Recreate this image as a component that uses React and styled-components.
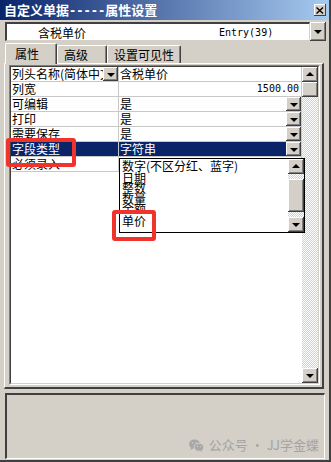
import React from 'react';
import styled, { createGlobalStyle } from 'styled-components';

const GlobalStyle = createGlobalStyle`
  body {
    margin: 0;
    background: #fff;
  }
  * {
    box-sizing: border-box;
  }
`;

const Window = styled.div`
  position: relative;
  width: 331px;
  height: 462px;
  display: flex;
  flex-direction: column;
  background: #d4d0c8;
  border-right: 2px solid #404040;
  border-bottom: 2px solid #404040;
  font-family: "Noto Sans CJK SC", sans-serif;
  font-size: 12px;
  color: #000;
  overflow: hidden;
`;

const TitleBar = styled.div`
  flex: none;
  height: 20px;
  display: flex;
  align-items: center;
  justify-content: space-between;
  padding: 0 3px 0 4px;
  background: linear-gradient(90deg, #0a246a 0%, #a6caf0 100%);
`;

const Title = styled.span`
  color: #fff;
  font-weight: bold;
  font-size: 13px;
  line-height: 20px;
  white-space: nowrap;
`;

const Dash = styled.span`
  font-family: "DejaVu Sans Mono", monospace;
  font-size: 12px;
  letter-spacing: 0;
`;

const CloseBtn = styled.div`
  width: 12px;
  height: 12px;
  display: flex;
  align-items: center;
  justify-content: center;
  background: #d4d0c8;
  box-shadow: inset -1px -1px #404040, inset 1px 1px #fff;
`;

const ComboRow = styled.div`
  flex: none;
  display: flex;
  height: 19px;
  margin: 2px 3px 0 5px;
`;

const ComboField = styled.div`
  flex: 1;
  display: flex;
  align-items: center;
  background: #fff;
  border-top: 2px solid #404040;
  border-left: 2px solid #404040;
  border-right: 1px solid #d4d0c8;
  border-bottom: 1px solid #d4d0c8;
`;

const ComboName = styled.span`
  width: 212px;
  padding-left: 31px;
  white-space: nowrap;
`;

const Mono = styled.span`
  font-family: "DejaVu Sans Mono", monospace;
  font-size: 10px;
  white-space: nowrap;
`;

const Button = styled.div`
  flex: none;
  width: ${p => p.$w || 16}px;
  height: ${p => p.$h || 15}px;
  display: flex;
  align-items: center;
  justify-content: center;
  margin-left: ${p => (p.$push ? 'auto' : '0')};
  background: #d4d0c8;
  box-shadow: inset -1px -1px #404040, inset 1px 1px #fff, inset -2px -2px #808080;
`;

const Arrow = styled.span`
  width: 0;
  height: 0;
  border-left: 4px solid transparent;
  border-right: 4px solid transparent;
  border-top: ${p => (p.$up ? '0' : '4px solid #000')};
  border-bottom: ${p => (p.$up ? '4px solid #000' : '0')};
  margin-top: ${p => (p.$up ? '-1px' : '1px')};
`;

const TabRow = styled.div`
  flex: none;
  display: flex;
  align-items: flex-end;
  height: 20px;
  margin-top: 2px;
  padding-left: 5px;
`;

const Tab = styled.div`
  position: relative;
  z-index: ${p => (p.$active ? 1 : 0)};
  width: ${p => p.$w}px;
  height: ${p => (p.$active ? 21 : 18)}px;
  margin-bottom: ${p => (p.$active ? -1 : 0)}px;
  padding: ${p => (p.$active ? '3px 0 0 9px' : '2px 0 0 6px')};
  background: #d4d0c8;
  border-top: 1px solid #fff;
  border-left: 1px solid #fff;
  border-right: 1px solid #404040;
  border-radius: 2px 2px 0 0;
  box-shadow: inset -1px 0 #808080;
  font-size: 12px;
  line-height: 14px;
  white-space: nowrap;
`;

const Panel = styled.div`
  flex: none;
  height: 326px;
  margin: 0 5px 0 4px;
  padding: 1px 2px 2px 4px;
  border-top: 1px solid #fff;
  border-left: 1px solid #fff;
  border-right: 2px solid #404040;
  border-bottom: 2px solid #404040;
  display: flex;
`;

const GridFrame = styled.div`
  flex: 1;
  display: flex;
  border-top: 1px solid #808080;
  border-left: 1px solid #808080;
  border-right: 1px solid #fff;
  border-bottom: 1px solid #fff;
`;

const GridInner = styled.div`
  flex: 1;
  display: flex;
  background: #fff;
  border-top: 1px solid #404040;
  border-left: 1px solid #404040;
  border-right: 1px solid #d4d0c8;
  border-bottom: 1px solid #d4d0c8;
`;

const Table = styled.div`
  position: relative;
  flex: 1;
  display: flex;
  flex-direction: column;
`;

const Row = styled.div`
  display: grid;
  grid-template-columns: 108px 1fr;
  height: 15px;
  border-bottom: 1px solid #c8c8c8;
`;

const Cell = styled.div`
  display: flex;
  align-items: center;
  min-width: 0;
  padding-left: ${p => (p.$num ? 0 : 1)}px;
  justify-content: ${p => (p.$num ? 'flex-end' : 'flex-start')};
  padding-right: ${p => (p.$num ? 2 : 0)}px;
  border-right: 1px solid #c8c8c8;
  background: ${p => (p.$sel ? '#0a246a' : '#fff')};
  color: ${p => (p.$sel ? '#fff' : '#000')};
  line-height: 14px;
  white-space: nowrap;
  overflow: hidden;
`;

const CellText = styled.span`
  flex: 1;
  min-width: 0;
  overflow: hidden;
  white-space: nowrap;
`;

const NumText = styled.span`
  font-family: "DejaVu Sans Mono", monospace;
  font-size: 10px;
`;

const VScroll = styled.div`
  flex: none;
  width: 16px;
  display: flex;
  flex-direction: column;
`;

const Track = styled.div`
  flex: 1;
  display: flex;
  flex-direction: column;
  padding-top: ${p => p.$offset || 0}px;
  background: repeating-conic-gradient(#d4d0c8 0 25%, #fff 0 50%) 0 0 / 2px 2px;
`;

const Popup = styled.div`
  position: absolute;
  left: 108px;
  top: 91px;
  width: 186px;
  height: 75px;
  display: flex;
  background: #fff;
  border: 1px solid #000;
`;

const PopupList = styled.div`
  flex: 1;
  display: flex;
  flex-direction: column;
  padding: 1px 0 0 2px;
`;

const PopupItem = styled.div`
  flex: none;
  height: ${p => p.$h}px;
  margin-top: ${p => p.$gap || 0}px;
  line-height: 12px;
  font-size: 12px;
  white-space: nowrap;
  overflow: ${p => (p.$clip ? 'hidden' : 'visible')};
`;

const Mark = styled.div`
  position: absolute;
  left: ${p => p.$x}px;
  top: ${p => p.$y}px;
  width: ${p => p.$w}px;
  height: ${p => p.$h}px;
  border: 4px solid #f0342c;
  border-radius: 3px;
  z-index: 5;
`;

const Status = styled.div`
  flex: 1;
  margin: 4px 4px 1px 5px;
  display: flex;
  align-items: flex-end;
  justify-content: flex-end;
  padding: 0 5px 5px 0;
  border-top: 2px solid #404040;
  border-left: 2px solid #404040;
  border-right: 1px solid #fff;
  border-bottom: 1px solid #fff;
`;

const Watermark = styled.div`
  display: flex;
  align-items: center;
  gap: 5px;
  color: #a4a4a4;
  font-size: 13px;
  line-height: 16px;
`;

const rows = [
  { name: '列头名称(简体中文)', value: '含税单价', nameBtn: true },
  { name: '列宽', value: '1500.00', num: true },
  { name: '可编辑', value: '是', btn: true },
  { name: '打印', value: '是', btn: true },
  { name: '需要保存', value: '是', btn: true },
  { name: '字段类型', value: '字符串', btn: true, sel: true },
  { name: '必须录入', value: '' },
];

const options = [
  { label: '数字(不区分红、蓝字)', h: 12 },
  { label: '日期', h: 10 },
  { label: '整数', h: 11 },
  { label: '数量', h: 10 },
  { label: '金额', h: 7, clip: true },
  { label: '单价', h: 13, gap: 5 },
];

function WeChatIcon() {
  return (
    <svg width="15" height="13" viewBox="0 0 15 13">
      <ellipse cx="5.5" cy="5" rx="5.5" ry="4.6" fill="#a8a8a8" />
      <path d="M2 8.5 L1.5 11 L4.5 9.2 Z" fill="#a8a8a8" />
      <ellipse cx="10" cy="8.3" rx="4.8" ry="4" fill="#a8a8a8" stroke="#d4d0c8" strokeWidth="1" />
      <path d="M12.5 11 L13.5 12.8 L10.8 11.8 Z" fill="#a8a8a8" />
      <circle cx="3.6" cy="4" r="0.8" fill="#d4d0c8" />
      <circle cx="7.2" cy="4" r="0.8" fill="#d4d0c8" />
      <circle cx="8.5" cy="7.6" r="0.7" fill="#d4d0c8" />
      <circle cx="11.6" cy="7.6" r="0.7" fill="#d4d0c8" />
    </svg>
  );
}

function App() {
  return (
    <>
      <GlobalStyle />
      <Window>
        <TitleBar>
          <Title>
            自定义单据<Dash>-----</Dash>属性设置
          </Title>
          <CloseBtn>
            <svg width="8" height="7" viewBox="0 0 8 7">
              <path d="M0.5 0.5 L7 6.5 M7 0.5 L0.5 6.5" stroke="#000" strokeWidth="1.4" />
            </svg>
          </CloseBtn>
        </TitleBar>

        <ComboRow>
          <ComboField>
            <ComboName>含税单价</ComboName>
            <Mono>Entry(39)</Mono>
          </ComboField>
          <Button $w={16} $h={19}>
            <Arrow />
          </Button>
        </ComboRow>

        <TabRow>
          <Tab $active $w={52}>属性</Tab>
          <Tab $w={50}>高级</Tab>
          <Tab $w={74}>设置可见性</Tab>
        </TabRow>

        <Panel>
          <GridFrame>
            <GridInner>
              <Table>
                {rows.map(r => (
                  <Row key={r.name}>
                    <Cell $sel={r.sel}>
                      <CellText>{r.name}</CellText>
                      {r.nameBtn && (
                        <Button $w={15} $h={14}>
                          <Arrow />
                        </Button>
                      )}
                    </Cell>
                    <Cell $sel={r.sel} $num={r.num}>
                      {r.num ? <NumText>{r.value}</NumText> : <CellText>{r.value}</CellText>}
                      {r.btn && (
                        <Button $w={15} $h={14} $push>
                          <Arrow />
                        </Button>
                      )}
                    </Cell>
                  </Row>
                ))}

                <Popup>
                  <PopupList>
                    {options.map(o => (
                      <PopupItem key={o.label} $h={o.h} $gap={o.gap} $clip={o.clip}>
                        {o.label}
                      </PopupItem>
                    ))}
                  </PopupList>
                  <VScroll>
                    <Button $h={15}>
                      <Arrow $up />
                    </Button>
                    <Track $offset={5}>
                      <Button $h={33} />
                    </Track>
                    <Button $h={15}>
                      <Arrow />
                    </Button>
                  </VScroll>
                </Popup>
              </Table>

              <VScroll>
                <Button $h={15}>
                  <Arrow $up />
                </Button>
                <Track>
                  <Button $h={15} />
                </Track>
                <Button $h={15}>
                  <Arrow />
                </Button>
              </VScroll>
            </GridInner>
          </GridFrame>
        </Panel>

        <Status>
          <Watermark>
            <WeChatIcon />
            <span>公众号 · JJ学金蝶</span>
          </Watermark>
        </Status>

        <Mark $x={6} $y={138} $w={70} $h={29} />
        <Mark $x={112} $y={210} $w={44} $h={31} />
      </Window>
    </>
  );
}

export default App;
